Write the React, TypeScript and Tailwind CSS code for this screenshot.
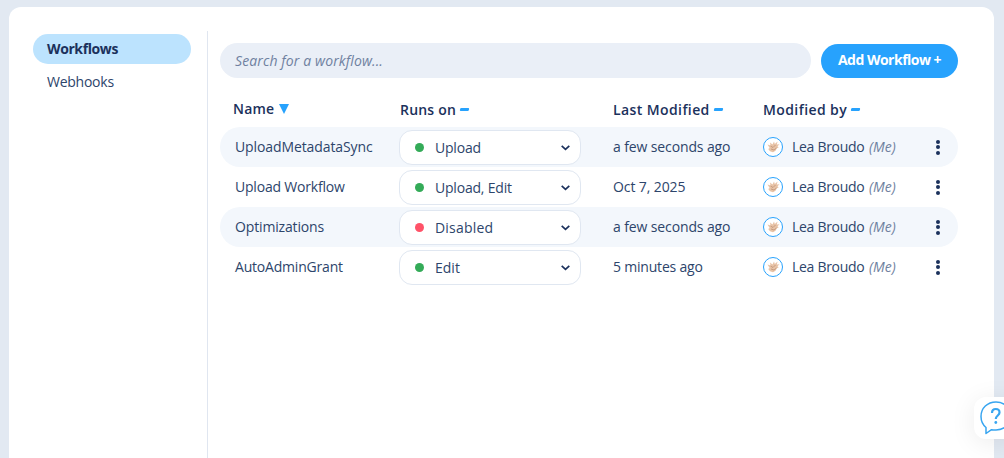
type Workflow = {
  name: string
  nameClass: string
  runsOn: string
  runsOnClass: string
  active: boolean
  modified: string
  modifiedClass: string
}

const workflows: Workflow[] = [
  { name: 'UploadMetadataSync', nameClass: 'tracking-[-0.1px]', runsOn: 'Upload', runsOnClass: 'tracking-[-0.2px]', active: true, modified: 'a few seconds ago', modifiedClass: 'tracking-[-0.12px]' },
  { name: 'Upload Workflow', nameClass: 'tracking-[-0.2px]', runsOn: 'Upload, Edit', runsOnClass: 'tracking-[-0.2px]', active: true, modified: 'Oct 7, 2025', modifiedClass: 'tracking-[-0.1px]' },
  { name: 'Optimizations', nameClass: 'tracking-[-0.15px]', runsOn: 'Disabled', runsOnClass: 'tracking-[0.2px]', active: false, modified: 'a few seconds ago', modifiedClass: 'tracking-[-0.12px]' },
  { name: 'AutoAdminGrant', nameClass: 'tracking-[-0.2px]', runsOn: 'Edit', runsOnClass: 'tracking-normal', active: true, modified: '5 minutes ago', modifiedClass: 'tracking-[-0.2px]' },
]

function Dash() {
  return <span className="mb-0.5 h-[3px] w-[9px] -skew-x-12 rounded-[1px] bg-[#27a2fd]" />
}

function Avatar() {
  return (
    <svg width="20" height="20" viewBox="0 0 20 20" className="shrink-0">
      <circle cx="10" cy="10" r="9.5" fill="#fff" stroke="#27a2fd" />
      <path d="M4.500 7.500l3 1L7 5.500l2.500 2L11 4.500l.8 2.500 2.800-2.500-.8 3 2.700-.3-2 2 1.200 1.200-1.800.8-1.400 2.600-2.500 1.500-3-1-1.800-2.300 1.500-1z" fill="#e8c3a6" />
      <path d="M7.500 9l2.500 1.500L12.500 8M8 12l3 1 2.500-2" fill="none" stroke="#bd9076" strokeWidth=".8" />
    </svg>
  )
}

function WorkflowRow({ workflow, striped }: { workflow: Workflow; striped: boolean }) {
  return (
    <div className={`flex h-10 items-center rounded-full pl-[15px] text-[14px] ${striped ? 'bg-[#f3f7fc]' : ''}`}>
      <div className={`w-[164px] shrink-0 ${workflow.nameClass}`}>{workflow.name}</div>
      <button className="mt-px flex h-[35px] w-[182px] shrink-0 items-center rounded-[13px] border border-[#e0e7f1] bg-white pl-[15px] pr-[10px]">
        <span className={`size-[9px] rounded-full ${workflow.active ? 'bg-[#34ab58]' : 'bg-[#ff5268]'}`} />
        <span className={`ml-[11px] ${workflow.runsOnClass}`}>{workflow.runsOn}</span>
        <svg className="ml-auto" width="9" height="6" viewBox="0 0 9 6" fill="none" stroke="#1b315c" strokeWidth="1.7">
          <path d="M.7.8l3.8 3.5L8.3.8" />
        </svg>
      </button>
      <div className={`ml-[32px] w-[150px] shrink-0 ${workflow.modifiedClass}`}>{workflow.modified}</div>
      <Avatar />
      <span className="ml-[9px] w-[77px] shrink-0 whitespace-nowrap tracking-[-0.3px]">Lea Broudo</span>
      <span className="italic text-[#6f81a0]">(Me)</span>
      <button className="ml-auto mr-[18px] flex flex-col gap-[1.5px]">
        <span className="size-1 rounded-full bg-[#1b315c]" />
        <span className="size-1 rounded-full bg-[#1b315c]" />
        <span className="size-1 rounded-full bg-[#1b315c]" />
      </button>
    </div>
  )
}

export default function App() {
  return (
    <div className="relative h-[458px] w-[1004px] overflow-hidden bg-[#e2e9f2] pl-[9px] pr-[10px] pt-[7px] font-['Open_Sans',sans-serif] text-[14px] leading-5 text-[#2d456b]">
      <div className="flex h-[470px] rounded-t-[12px] bg-white pl-6 pt-6">
        <nav className="w-[175px] shrink-0 border-r border-[#e0e6f0] pr-4 pt-[3px]">
          <div className="flex h-[30px] items-center rounded-full bg-[#bce3fe] pl-[14px] font-bold tracking-[-0.4px] text-[#1b315c]">Workflows</div>
          <div className="mt-[3px] flex h-[30px] items-center pl-[14px] tracking-[-0.25px]">Webhooks</div>
        </nav>
        <main className="ml-3 w-[738px] pt-3">
          <div className="flex items-end gap-[10px]">
            <div className="flex h-[35px] w-[591px] items-center rounded-full bg-[#eaeff7] pl-[15px] italic tracking-[0.12px] text-[#6f81a0]">Search for a workflow...</div>
            <button className="flex h-[34px] w-[137px] items-center justify-center rounded-full bg-[#27a2fd] pb-[3px] font-bold tracking-[-0.5px] text-white">Add Workflow +</button>
          </div>
          <div className="mt-[17px] flex h-8 items-center pb-0.5 pl-[13px] font-semibold text-[#1b315c]">
            <div className="flex w-[167px] items-center gap-[5px] pb-0.5">
              <span className="tracking-[0.2px]">Name</span>
              <svg width="10" height="10" viewBox="0 0 10 10" fill="#27a2fd"><path d="M0 0h10L5 10z" /></svg>
            </div>
            <div className="flex w-[213px] items-center gap-1"><span className="tracking-[0.2px]">Runs on</span><Dash /></div>
            <div className="flex w-[150px] items-center gap-1"><span className="tracking-[0.4px]">Last Modified</span><Dash /></div>
            <div className="flex items-center gap-1"><span className="tracking-[0.4px]">Modified by</span><Dash /></div>
          </div>
          {workflows.map((workflow, i) => (
            <WorkflowRow key={workflow.name} workflow={workflow} striped={i % 2 === 0} />
          ))}
        </main>
      </div>
      <button className="absolute left-[974px] top-[397px] h-[42px] w-[46px] rounded-[12px] bg-white pl-[6px] shadow-[0_4px_26px_rgba(0,0,0,0.08)]">
        <svg width="32" height="36" viewBox="0 0 32 36" fill="none" stroke="#38a5f0" strokeWidth="1.5">
          <path d="M6 33.500V27.500C2.500 24.500 1 20.500 1 16.500C1 8 7.500 2 16 2s15 6 15 14-6.500 14-15 14c-1.500 0-3 0-4.500-.3L6 33.500z" strokeLinejoin="round" />
          <path d="M12 13c0-2.500 1.500-4 3.800-4s3.700 1.500 3.700 3.500c0 3-3.700 3-3.700 6.500" strokeWidth="2.2" />
          <circle cx="15.800" cy="22.500" r="1.400" fill="#38a5f0" stroke="none" />
        </svg>
      </button>
    </div>
  )
}
